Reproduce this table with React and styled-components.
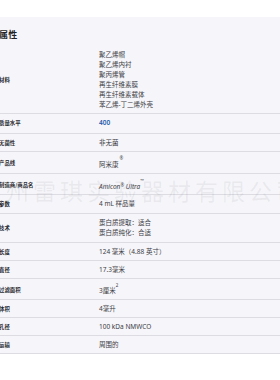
import React from "react";
import styled, { createGlobalStyle } from "styled-components";

const Global = createGlobalStyle`
  html, body { margin: 0; padding: 0; background: #ffffff; }
  body { width: 280px; height: 380px; overflow: hidden; font-family: "Noto Sans", "Noto Sans CJK SC", sans-serif; }
`;

const Page = styled.div`
  position: relative;
  padding-top: 17px;
  width: 280px;
`;

const Panel = styled.section`
  background: #f6f6fa;
  padding-top: 12px;
`;

const Heading = styled.h2`
  margin: 0 0 5px -1px;
  font-family: "Noto Sans CJK SC", sans-serif;
  font-size: 9px;
  line-height: 12px;
  font-weight: 700;
  color: #1f1f24;
  letter-spacing: 0.3px;
`;

const Row = styled.div`
  display: grid;
  grid-template-columns: 99px 1fr;
  align-items: center;
  padding: 4px 0 ${(p) => p.$pb || "3px"};
  border-bottom: 1px solid #dcdce2;
`;

const Label = styled.div`
  margin-left: -1px;
  font-family: "Noto Sans CJK SC", sans-serif;
  font-size: 5.4px;
  line-height: 10px;
  font-weight: 700;
  color: #2a2a30;
`;

const Value = styled.div`
  font-family: "Noto Sans", "Noto Sans CJK SC", sans-serif;
  font-size: 6.5px;
  line-height: 10px;
  color: ${(p) => (p.$link ? "#1f5aa8" : "#3c3c44")};
  font-weight: ${(p) => (p.$link ? 600 : 400)};
  font-style: ${(p) => (p.$italic ? "italic" : "normal")};
`;

const Line = styled.div``;

const Sup = styled.sup`
  font-size: 4.5px;
  line-height: 1;
  vertical-align: ${(p) => p.$raise || "6px"};
  margin-left: ${(p) => p.$ml || "0"};
`;

const Watermark = styled.div`
  position: absolute;
  left: 6px;
  top: 178px;
  font-family: "Noto Sans CJK SC", sans-serif;
  font-size: 23px;
  line-height: 24px;
  letter-spacing: 4px;
  white-space: nowrap;
  color: rgba(140, 140, 150, 0.13);
  pointer-events: none;
`;

const rows = [
  { label: "材料", lines: ["聚乙烯帽", "聚乙烯内衬", "聚丙烯管", "再生纤维素膜", "再生纤维素载体", "苯乙烯-丁二烯外壳"] },
  { label: "质量水平", lines: ["400"], link: true, pb: "5px" },
  { label: "无菌性", lines: ["非无菌"] },
  { label: "产品线", custom: <>阿米康<Sup $raise="7px" $ml="1px">®</Sup></> },
  { label: "制造商/商品名", italic: true, pb: "2px", custom: <>Amicon<Sup $raise="2px">®</Sup> Ultra<Sup $raise="7px">™</Sup></> },
  { label: "参数", lines: ["4 mL 样品量"], pb: "4px" },
  { label: "技术", lines: ["蛋白质提取：适合", "蛋白质纯化：合适"], pb: "4px" },
  { label: "长度", lines: ["124 毫米（4.88 英寸）"] },
  { label: "直径", lines: ["17.3毫米"] },
  { label: "过滤面积", custom: <>3厘米<Sup $raise="6px">2</Sup></> },
  { label: "体积", lines: ["4毫升"] },
  { label: "孔径", lines: ["100 kDa NMWCO"] },
  { label: "运输", lines: ["周围的"] },
];

export default function App() {
  return (
    <Page>
      <Global />
      <Panel>
        <Heading>属性</Heading>
        {rows.map((r) => (
          <Row key={r.label} $pb={r.pb}>
            <Label>{r.label}</Label>
            <Value $link={r.link} $italic={r.italic}>
              {r.custom ? r.custom : r.lines.map((l) => <Line key={l}>{l}</Line>)}
            </Value>
          </Row>
        ))}
      </Panel>
      <Watermark>州雷琪实验器材有限公司</Watermark>
    </Page>
  );
}
